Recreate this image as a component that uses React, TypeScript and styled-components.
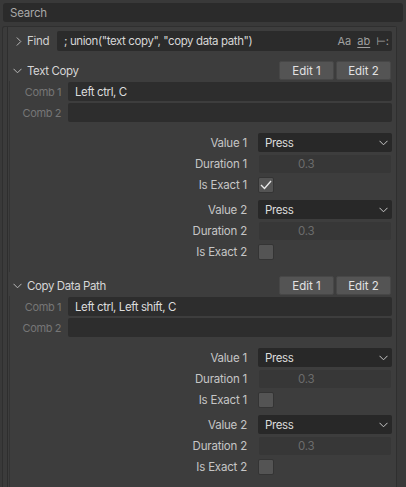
import React from "react";
import styled, { createGlobalStyle } from "styled-components";

const Global = createGlobalStyle`
  html, body { margin: 0; padding: 0; background: #393939; }
  body { font-family: Inter, "DejaVu Sans", sans-serif; font-size: 11.5px; }
  * { box-sizing: border-box; }
`;

const Root = styled.div`
  width: 406px;
  height: 487px;
  overflow: hidden;
  background: #393939;
  padding-top: 3px;
`;

const SearchBar = styled.div`
  margin: 0 3px;
  height: 19px;
  background: #2b2b2b;
  border-radius: 3px;
  color: #a8a8a8;
  padding-left: 7px;
  display: flex;
  align-items: center;
  font-size: 11.5px;
  letter-spacing: -0.2px;
`;

const Region = styled.div`
  margin: 4px 9px 0 2px;
  height: 470px;
  border: 1px solid #2f2f2f;
  border-bottom: none;
  border-radius: 3px 3px 0 0;
  background: #3b3b3b;
  padding-left: 4px;
`;

const Inner = styled.div`
  height: 100%;
  border-left: 1px solid #2e2e2e;
  background: #3d3d3d;
  padding: 4px 4px 0 0;
`;

const FindRow = styled.div`
  display: flex;
  align-items: center;
  height: 20px;
  padding-left: 8px;
`;

const Chevron = styled.svg`
  flex: none;
  display: block;
`;

const FindLabel = styled.span`
  color: #d0d0d0;
  margin-left: 5px;
  width: 30px;
  letter-spacing: -0.3px;
`;

const FindInput = styled.div`
  flex: 1;
  height: 20px;
  background: #2b2b2b;
  border-radius: 2px;
  display: flex;
  align-items: center;
  padding: 0 3px 0 7px;
  color: #d6d6d6;
`;

const FindText = styled.span`
  flex: 1;
  white-space: nowrap;
  letter-spacing: -0.4px;
`;

const FindIcons = styled.span`
  display: flex;
  align-items: center;
  gap: 6px;
  color: #a0a0a0;
  font-size: 11px;
`;

const AbIcon = styled.span`
  text-decoration: underline;
  text-underline-offset: 2px;
`;

const Panel = styled.div<{ $first?: boolean }>`
  margin-top: ${(p) => (p.$first ? 10 : 4)}px;
`;

const Header = styled.div`
  display: flex;
  align-items: center;
  height: 19px;
  padding-left: 5px;
`;

const HeaderTitle = styled.span`
  color: #d6d6d6;
  margin-left: 5px;
  flex: 1;
  letter-spacing: -0.4px;
`;

const EditGroup = styled.div`
  display: flex;
  gap: 2px;
  margin-right: 1px;
`;

const EditButton = styled.div`
  width: 55px;
  height: 19px;
  background: #545454;
  border: 1px solid #474747;
  border-radius: 2px;
  color: #e2e2e2;
  display: flex;
  align-items: center;
  justify-content: center;
`;

const Body = styled.div`
  margin: 1px 0 0 1px;
  border-left: 1px solid #333333;
  padding: 1px 0 12px 0;
`;

const CombRow = styled.div`
  display: flex;
  align-items: center;
  height: 19px;
  & + & { margin-top: 2px; }
`;

const CombLabel = styled.span`
  width: 51px;
  text-align: right;
  color: #767676;
  font-size: 11px;
  letter-spacing: -0.4px;
`;

const CombField = styled.div`
  flex: 1;
  margin-left: 7px;
  height: 19px;
  background: #2d2d2d;
  border-radius: 2px;
  color: #dcdcdc;
  padding-left: 7px;
  display: flex;
  align-items: center;
  letter-spacing: -0.4px;
`;

const Props = styled.div`
  margin-top: 11px;
  display: flex;
  flex-direction: column;
`;

const PropRow = styled.div<{ $gap: number }>`
  display: flex;
  align-items: center;
  margin-bottom: ${(p) => p.$gap}px;
`;

const PropLabel = styled.span`
  width: 237px;
  text-align: right;
  color: #c6c6c6;
  margin-right: 11px;
  letter-spacing: -0.2px;
`;

const Dropdown = styled.div`
  flex: 1;
  height: 19px;
  background: #282828;
  border-radius: 2px;
  color: #dcdcdc;
  display: flex;
  align-items: center;
  padding: 0 4px 0 7px;
  justify-content: space-between;
  letter-spacing: -0.4px;
`;

const NumberField = styled.div`
  flex: 1;
  margin: 0 1px;
  height: 18px;
  background: #373737;
  border-radius: 2px;
  color: #6c6c6c;
  display: flex;
  align-items: center;
  padding-left: 39px;
  letter-spacing: -0.2px;
`;

const Checkbox = styled.div`
  width: 16px;
  height: 16px;
  background: #545454;
  border: 1px solid #343434;
  border-radius: 2px;
  display: flex;
  align-items: center;
  justify-content: center;
`;

const DownChevron = ({ color = "#b8b8b8" }: { color?: string }) => (
  <Chevron width="9" height="6" viewBox="0 0 9 6">
    <polyline points="0.5,0.8 4.5,4.8 8.5,0.8" fill="none" stroke={color} strokeWidth="1" />
  </Chevron>
);

const RightChevron = () => (
  <Chevron width="6" height="9" viewBox="0 0 6 9">
    <polyline points="0.8,0.5 4.8,4.5 0.8,8.5" fill="none" stroke="#b8b8b8" strokeWidth="1" />
  </Chevron>
);

const Check = () => (
  <svg width="12" height="10" viewBox="0 0 12 10">
    <polyline points="1,5 4.5,8.5 11,1" fill="none" stroke="#e8e8e8" strokeWidth="1.4" />
  </svg>
);

type Item = { title: string; comb1: string; exact1: boolean; exact2: boolean };

const items: Item[] = [
  { title: "Text Copy", comb1: "Left ctrl, C", exact1: true, exact2: false },
  { title: "Copy Data Path", comb1: "Left ctrl, Left shift, C", exact1: false, exact2: false },
];

const PanelView = ({ item, first }: { item: Item; first?: boolean }) => (
  <Panel $first={first}>
    <Header>
      <DownChevron />
      <HeaderTitle>{item.title}</HeaderTitle>
      <EditGroup>
        <EditButton>Edit 1</EditButton>
        <EditButton>Edit 2</EditButton>
      </EditGroup>
    </Header>
    <Body>
      <CombRow>
        <CombLabel>Comb 1</CombLabel>
        <CombField>{item.comb1}</CombField>
      </CombRow>
      <CombRow>
        <CombLabel>Comb 2</CombLabel>
        <CombField />
      </CombRow>
      <Props>
        {[1, 2].map((n) => (
          <React.Fragment key={n}>
            <PropRow $gap={3}>
              <PropLabel>Value {n}</PropLabel>
              <Dropdown>
                <span>Press</span>
                <DownChevron color="#c8c8c8" />
              </Dropdown>
            </PropRow>
            <PropRow $gap={4}>
              <PropLabel>Duration {n}</PropLabel>
              <NumberField>0.3</NumberField>
            </PropRow>
            <PropRow $gap={n === 1 ? 7 : 0}>
              <PropLabel>Is Exact {n}</PropLabel>
              <Checkbox>{(n === 1 ? item.exact1 : item.exact2) && <Check />}</Checkbox>
            </PropRow>
          </React.Fragment>
        ))}
      </Props>
    </Body>
  </Panel>
);

export default function App() {
  return (
    <>
      <Global />
      <Root>
        <SearchBar>Search</SearchBar>
        <Region>
          <Inner>
            <FindRow>
              <RightChevron />
              <FindLabel>Find</FindLabel>
              <FindInput>
                <FindText>; union("text copy", "copy data path")</FindText>
                <FindIcons>
                  <span>Aa</span>
                  <AbIcon>ab</AbIcon>
                  <span>⊢:</span>
                </FindIcons>
              </FindInput>
            </FindRow>
            {items.map((it, i) => (
              <PanelView key={it.title} item={it} first={i === 0} />
            ))}
          </Inner>
        </Region>
      </Root>
    </>
  );
}
